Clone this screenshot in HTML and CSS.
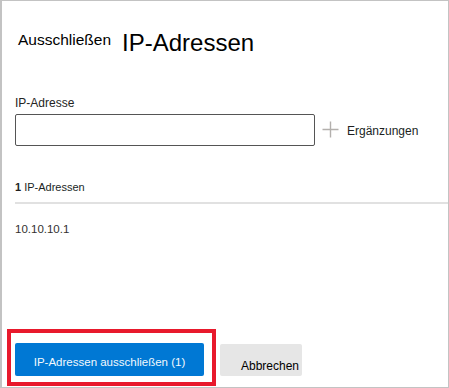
FILE: index.html
```html
<!DOCTYPE html>
<html lang="de">
<head>
<meta charset="utf-8">
<title>IP-Adressen ausschließen</title>
<link rel="stylesheet" href="styles.css">
</head>
<body>
<div class="panel">
  <div class="title">
    <span class="title-small">Ausschließen</span>
    <span class="title-big">IP-Adressen</span>
  </div>
  <div class="label">IP-Adresse</div>
  <div class="input-row">
    <div class="input"></div>
    <button class="add">
      <svg class="plus" width="17" height="17" viewBox="0 0 17 17" aria-hidden="true">
        <path d="M8.5 0.5v16M0.5 8.5h16" stroke="#b3b0ad" stroke-width="1.4" fill="none"/>
      </svg>
      <span>Ergänzungen</span>
    </button>
  </div>
  <div class="count"><span class="num">1</span> IP-Adressen</div>
  <div class="divider"></div>
  <div class="item">10.10.10.1</div>
  <div class="footer">
    <button class="btn-primary">IP-Adressen ausschließen (1)</button>
    <button class="btn-secondary">Abbrechen</button>
  </div>
  <div class="highlight"></div>
</div>
</body>
</html>
```

FILE: styles.css
```css
html, body {
  margin: 0;
  padding: 0;
  background: #ffffff;
}

body {
  font-family: "Liberation Sans", Arial, sans-serif;
  color: #000000;
}

.panel {
  position: relative;
  box-sizing: border-box;
  width: 449px;
  height: 388px;
  border: 1px solid #c3c3c3;
  border-left-width: 2px;
  padding-left: 13px;
  display: flex;
  flex-direction: column;
}

.title {
  display: flex;
  align-items: flex-start;
  gap: 11px;
  margin: 30px 0 0 3px;
}

.title-small {
  font-size: 15.5px;
  line-height: 15px;
  margin-top: 1px;
}

.title-big {
  font-size: 24px;
  line-height: 24px;
}

.label {
  font-size: 12px;
  line-height: 16px;
  color: #252423;
  margin-top: 40px;
}

.input-row {
  display: flex;
  align-items: center;
  margin-top: 3px;
  height: 32px;
}

.input {
  box-sizing: border-box;
  width: 300px;
  height: 32px;
  border: 1px solid #555555;
  border-radius: 2px;
}

.add {
  display: flex;
  align-items: center;
  gap: 8px;
  margin-left: 7px;
  padding: 0;
  border: 0;
  background: none;
  font-family: inherit;
  font-size: 12px;
  color: #201f1e;
  height: 32px;
}

.plus {
  display: block;
  margin-top: -1px;
}

.add span {
  padding-top: 1px;
}

.count {
  font-size: 11px;
  line-height: 14px;
  color: #201f1e;
  margin-top: 34px;
}

.num {
  font-weight: bold;
}

.divider {
  height: 2px;
  background: #e1e1e1;
  margin-top: 8px;
}

.item {
  font-size: 11.5px;
  line-height: 14px;
  color: #323130;
  margin-top: 18px;
}

.footer {
  margin-top: auto;
  padding-bottom: 11px;
  display: flex;
  align-items: flex-start;
  gap: 16px;
}

.btn-primary {
  box-sizing: border-box;
  width: 189px;
  height: 33px;
  border: 0;
  border-radius: 2px;
  background: #0078d4;
  color: #f3f8fd;
  font-family: inherit;
  font-size: 11.5px;
  line-height: 14px;
  padding: 4px 0 0 0;
  text-align: center;
}

.btn-secondary {
  box-sizing: border-box;
  width: 82px;
  height: 32px;
  margin-top: 1px;
  border: 0;
  border-radius: 2px;
  background: #e6e6e6;
  color: #000000;
  font-family: inherit;
  font-size: 12px;
  line-height: 14px;
  padding: 12px 0 0 21px;
  text-align: left;
  white-space: nowrap;
  display: block;
}

.highlight {
  position: absolute;
  left: 5px;
  top: 328px;
  width: 209px;
  height: 57px;
  box-sizing: border-box;
  border: 4px solid #e8192c;
  pointer-events: none;
}
```
